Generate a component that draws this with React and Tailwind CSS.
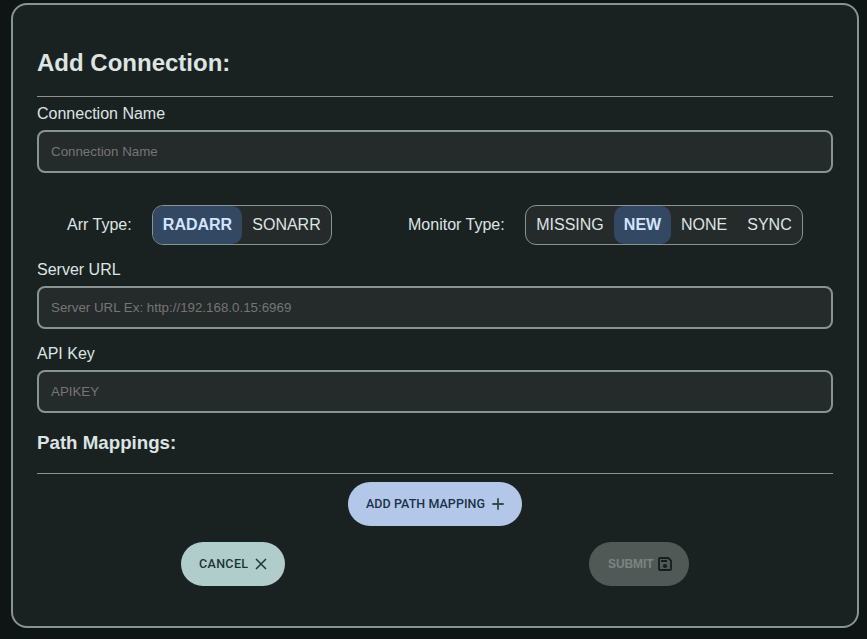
import React from "react";

function Field({ label, placeholder, labelClass }) {
  return (
    <label className="block">
      <span className={`block text-[16px] leading-[18px] text-[#dde4e3] ${labelClass}`}>{label}</span>
      <input
        type="text"
        placeholder={placeholder}
        className="block h-[43px] w-full rounded-lg border-2 border-[#899392] bg-[#252b2a] px-3 text-[13.333px] text-[#dde4e3] outline-none placeholder:text-[#757575]"
      />
    </label>
  );
}

function Segment({ children, active, className }) {
  return (
    <button
      type="button"
      className={`h-[38px] shrink-0 text-center text-[16px] leading-[36px] whitespace-nowrap ${
        active ? "rounded-[10px] bg-[#334863] font-bold text-[#d3e4ff]" : "text-[#dde4e3]"
      } ${className}`}
    >
      {children}
    </button>
  );
}

function PlusIcon() {
  return (
    <svg viewBox="0 0 16 16" className="h-4 w-4 text-[#324b4b]" fill="none" stroke="currentColor">
      <path d="M8 2.3V13.7M2.3 8H13.7" strokeWidth="1.8" />
    </svg>
  );
}

function CloseIcon() {
  return (
    <svg viewBox="0 0 16 16" className="h-4 w-4 text-[#1b3535]" fill="none" stroke="currentColor">
      <path d="M3 3L13 13M13 3L3 13" strokeWidth="1.45" />
    </svg>
  );
}

function SaveIcon() {
  return (
    <svg viewBox="0 0 14 14" className="h-[14px] w-[14px] text-[#161d1d]" fill="none" stroke="currentColor">
      <path d="M2 1H10.3L13 3.7V12Q13 13 12 13H2Q1 13 1 12V2Q1 1 2 1Z" strokeWidth="1.8" />
      <path d="M3 3H9V5H3Z" fill="currentColor" stroke="none" />
      <circle cx="7" cy="9" r="2.1" fill="currentColor" stroke="none" />
    </svg>
  );
}

export default function App() {
  return (
    <div className="h-[639px] w-[867px] overflow-hidden bg-[#0e1514] pt-[3px] pl-[11px] font-['Liberation_Sans',Arial,sans-serif]">
      <form className="h-[625px] w-[848px] rounded-2xl border-2 border-[#899392] bg-[#1a2221] px-6">
        <h2 className="h-[92px] border-b border-[#899392] pt-[44px] text-[24px] leading-[28px] font-bold text-[#dde4e3]">
          Add Connection:
        </h2>
        <Field label="Connection Name" placeholder="Connection Name" labelClass="pt-2 pb-[7px]" />

        <div className="mt-8 flex h-10 items-center pl-[30px] text-[16px] leading-[38px] text-[#dde4e3]">
          <span className="w-[85px]">Arr Type:</span>
          <div className="flex h-10 w-[180px] rounded-[11px] border border-[#899392] bg-[#252b2a]">
            <Segment active className="w-[89px]">RADARR</Segment>
            <Segment className="w-[89px]">SONARR</Segment>
          </div>
          <span className="ml-[76px] w-[117px]">Monitor Type:</span>
          <div className="flex h-10 w-[278px] rounded-[11px] border border-[#899392] bg-[#252b2a]">
            <Segment className="w-[88px]">MISSING</Segment>
            <Segment active className="w-[57px]">NEW</Segment>
            <Segment className="w-[66px]">NONE</Segment>
            <Segment className="w-[65px]">SYNC</Segment>
          </div>
        </div>

        <Field label="Server URL" placeholder="Server URL Ex: http://192.168.0.15:6969" labelClass="pt-4 pb-[7px]" />
        <Field label="API Key" placeholder="APIKEY" labelClass="pt-4 pb-[7px]" />

        <h3 className="h-[61px] border-b border-[#899392] pt-[19px] text-[18.72px] leading-[21px] font-bold text-[#dde4e3]">
          Path Mappings:
        </h3>

        <div className="flex justify-center pt-2">
          <button
            type="button"
            className="flex h-11 w-[174px] items-center rounded-full bg-[#b3c8e8] pl-[18px] font-['Roboto',sans-serif] text-[12.5px] font-medium whitespace-nowrap text-[#1c314b]"
          >
            <span className="w-[124px] text-left tracking-[0.06px]">ADD PATH MAPPING</span>
            <PlusIcon />
          </button>
        </div>

        <div className="mt-4 flex justify-between pr-[144px] pl-[144px]">
          <button
            type="button"
            className="flex h-11 w-[104px] items-center rounded-full bg-[#b0cccb] pl-[18px] font-['Roboto',sans-serif] text-[12.5px] font-medium text-[#1b3535]"
          >
            <span className="w-[54px] text-left tracking-[0.35px]">CANCEL</span>
            <CloseIcon />
          </button>
          <button
            type="button"
            disabled
            className="flex h-11 w-[100px] items-center rounded-full bg-[#515957] pl-[19px] text-[12px] font-bold text-[#7c8482]"
          >
            <span className="w-[50px] text-left tracking-[-0.1px]">SUBMIT</span>
            <SaveIcon />
          </button>
        </div>
      </form>
    </div>
  );
}
